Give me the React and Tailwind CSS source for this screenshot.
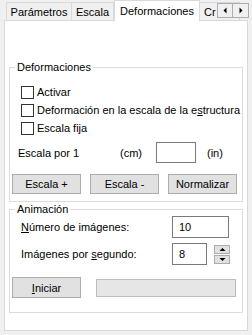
const font = { fontFamily: '"Liberation Sans", Arial, sans-serif' };

const Tab = ({ children, active, className = "" }) => (
  <div
    className={
      active
        ? "relative z-10 -mb-px flex h-[21px] items-start whitespace-nowrap border border-b-0 border-[#d9d9d9] bg-white px-[6px] pt-[3px] " + className
        : "flex h-[18px] items-center whitespace-nowrap border border-b-0 border-[#d9d9d9] bg-[#f0f0f0] px-[4px] " + className
    }
  >
    {children}
  </div>
);

const Check = ({ children }) => (
  <div className="flex h-[18px] items-center gap-[3px] whitespace-nowrap">
    <div className="h-[13px] w-[13px] shrink-0 border border-[#333333] bg-white" />
    <span className="leading-[14px]">{children}</span>
  </div>
);

const Btn = ({ children, className = "" }) => (
  <div className={"flex items-center justify-center border border-[#adadad] bg-[#e1e1e1] " + className}>
    {children}
  </div>
);

const Arrow = ({ dir }) => (
  <svg width="7" height="7" viewBox="0 0 7 7">
    {dir === "left" && <path d="M4.5 0.5 L4.5 6.5 L1.5 3.5 Z" fill="#000" />}
    {dir === "right" && <path d="M2.5 0.5 L2.5 6.5 L5.5 3.5 Z" fill="#000" />}
    {dir === "up" && <path d="M0.5 5 L6.5 5 L3.5 2 Z" fill="#000" />}
    {dir === "down" && <path d="M0.5 2 L6.5 2 L3.5 5 Z" fill="#000" />}
  </svg>
);

const Group = ({ title, className = "", children }) => (
  <div className={"relative ml-[4px] w-[234px] border border-[#dcdcdc] " + className}>
    <span className="absolute -top-[8px] left-[5px] bg-white px-[2px] leading-[14px]">{title}</span>
    {children}
  </div>
);

export default function App() {
  return (
    <div className="h-[335px] w-[252px] overflow-hidden bg-[#f0f0f0] text-[11px] leading-[14px] text-black" style={font}>
      <div className="relative flex h-[20px] items-end pl-[6px]">
        <Tab className="w-[66px] justify-center">Parámetros</Tab>
        <Tab className="w-[42px] justify-center border-l-0">Escala</Tab>
        <Tab active className="w-[86px] justify-center">Deformaciones</Tab>
        <Tab className="w-[40px] overflow-hidden border-l-0">Cr</Tab>
        <div className="absolute left-[217px] top-[3px] z-20 flex">
          <div className="flex h-[15px] w-[16px] items-center justify-center border border-[#adadad] bg-[#f0f0f0]">
            <Arrow dir="left" />
          </div>
          <div className="flex h-[15px] w-[16px] items-center justify-center border border-l-0 border-[#adadad] bg-[#f0f0f0]">
            <Arrow dir="right" />
          </div>
        </div>
      </div>

      <div className="ml-[4px] h-[311px] w-[244px] border border-[#d9d9d9] bg-white">
        <Group title="Deformaciones" className="mt-[46px] pb-[7px]">
          <div className="pl-[11px] pt-[15px]">
            <Check>Activar</Check>
            <Check>
              Deformación en la escala de la e<span className="underline">s</span>tructura
            </Check>
            <Check>Escala fija</Check>
          </div>
          <div className="mt-[5px] flex h-[21px] items-center whitespace-nowrap pl-[8px]">
            <span className="w-[102px]">Escala por 1</span>
            <span className="w-[36px]">(cm)</span>
            <div className="h-[21px] w-[40px] border border-[#7a7a7a]" />
            <span className="ml-[11px]">(in)</span>
          </div>
          <div className="mt-[11px] flex gap-[9px] pl-[2px]">
            <Btn className="h-[20px] w-[69px]">Escala +</Btn>
            <Btn className="h-[20px] w-[69px]">Escala -</Btn>
            <Btn className="h-[20px] w-[69px]">Normalizar</Btn>
          </div>
        </Group>

        <Group title="Animación" className="mt-[7px] h-[104px]">
          <div className="mt-[6px] flex h-[22px] items-center pl-[11px]">
            <span className="w-[151px]">
              <span className="underline">N</span>úmero de imágenes:
            </span>
            <div className="flex h-[22px] w-[57px] items-center border border-[#7a7a7a] pl-[6px]">10</div>
          </div>
          <div className="mt-[5px] flex h-[22px] items-center pl-[11px]">
            <span className="w-[151px]">
              Imágenes por <span className="underline">s</span>egundo:
            </span>
            <div className="flex h-[22px] w-[35px] items-center border border-[#7a7a7a] pl-[6px]">8</div>
            <div className="ml-[7px] flex flex-col gap-[1px]">
              <div className="flex h-[9px] w-[16px] items-center justify-center border border-[#adadad] bg-[#e1e1e1]">
                <Arrow dir="up" />
              </div>
              <div className="flex h-[9px] w-[16px] items-center justify-center border border-[#adadad] bg-[#e1e1e1]">
                <Arrow dir="down" />
              </div>
            </div>
          </div>
          <div className="mt-[12px] flex items-center pl-[2px]">
            <Btn className="h-[21px] w-[69px]">
              <span>
                <span className="underline">I</span>niciar
              </span>
            </Btn>
            <div className="ml-[15px] h-[18px] w-[140px] border border-[#bcbcbc] bg-[#e6e6e6]" />
          </div>
        </Group>
      </div>
    </div>
  );
}
